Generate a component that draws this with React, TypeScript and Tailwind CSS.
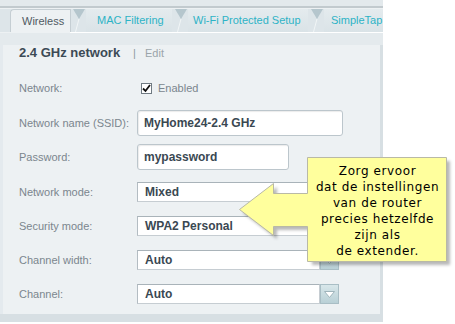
import React from "react";

const labelCls = "w-[118px] shrink-0 text-[11px] text-[#7b868e]";
const valCls = "text-[12px] font-bold text-[#3a4852]";

function Notch({ first }: { first?: boolean }) {
  return (
    <svg width="16" height="23" viewBox="0 0 16 23" className="shrink-0 block">
      <rect x="0" y="0" width="16" height="23" fill="#dde5e9" />
      {first && <rect x="0" y="0" width="1" height="23" fill="#c5ced3" />}
      <polygon points="3,0 15,0 9,10" fill="#b5c6cd" />
      <line x1="9" y1="10" x2="5.5" y2="23" stroke="#f1f5f6" strokeWidth="1" />
    </svg>
  );
}

function SelectBox({ value }: { value: string }) {
  return (
    <div className="flex h-[20px]">
      <div className="w-[183px] h-full bg-white border border-[#c6cdd2] border-t-[#a9b3b9] border-l-[#b3bcc2] flex items-center pl-[7px]">
        <span className={valCls}>{value}</span>
      </div>
      <div className="w-[19px] h-full border border-[#a9bec5] bg-gradient-to-b from-[#d8e7ea] to-[#b9d0d6] flex items-center justify-center">
        <svg width="11" height="7" viewBox="0 0 11 7">
          <polygon points="0.5,0.5 10.5,0.5 5.5,6.5" fill="#ffffff" stroke="#9fb4bb" strokeWidth="1" />
        </svg>
      </div>
    </div>
  );
}

export default function App() {
  return (
    <div className="w-[455px] h-[324px] bg-white relative overflow-hidden font-['Liberation_Sans',Arial,sans-serif]">
      <div className="w-[383px] flex flex-col">
        <div className="h-[6px] bg-[#e3e9ec]" />
        <div className="h-[2px] bg-[#c2cace]" />
        <div className="h-[1px] bg-[#edf1f3]" />
        <div className="flex h-[23px] bg-[#dde5e9]">
          <div className="w-[10px] shrink-0" />
          <div className="w-[60px] shrink-0 bg-[#edf1f3] border-l border-t border-[#c5ced3] rounded-tl-[4px] flex items-center pl-[11px] text-[11px] text-[#4f5a62]">
            Wireless
          </div>
          <Notch first />
          <div className="w-[86px] shrink-0 flex items-center pl-[11px] text-[11px] text-[#2db3c6] bg-gradient-to-b from-[#e4ebee] to-[#dae3e7]">
            MAC Filtering
          </div>
          <Notch />
          <div className="w-[120px] shrink-0 flex items-center pl-[5px] text-[11px] text-[#2db3c6] bg-gradient-to-b from-[#e4ebee] to-[#dae3e7]">
            Wi-Fi Protected Setup
          </div>
          <Notch />
          <div className="flex-1 flex items-center pl-[7px] text-[11px] text-[#2db3c6] bg-gradient-to-b from-[#e4ebee] to-[#dae3e7]">
            SimpleTap
          </div>
        </div>
        <div className="flex h-[1px]">
          <div className="w-[70px] bg-[#edf1f3]" />
          <div className="flex-1 bg-white" />
        </div>
        <div className="h-[12px] bg-[#e4eaed]" />
        <div className="flex bg-[#d7dfe3] pr-[3px] pb-[8px]">
          <div className="w-[3px] bg-[#e4eaee]" />
          <div className="flex-1 bg-[#edf1f3] flex flex-col pl-[16px] h-[269px]">
            <div className="h-[16px] flex items-center">
              <span className="text-[13px] font-bold text-[#3c4a55] w-[114px]">2.4 GHz network</span>
              <span className="text-[11px] text-[#8e989e] w-[12px]">|</span>
              <span className="text-[11px] text-[#9ba4aa]">Edit</span>
            </div>
            <div className="h-[24px] mt-[15px] flex items-center">
              <span className={labelCls}>Network:</span>
              <div className="ml-[4px] w-[11px] h-[11px] bg-white border border-[#6f7a82] flex items-center justify-center">
                <svg width="9" height="9" viewBox="0 0 9 9">
                  <path d="M1 4.5 L3.5 7 L8 1" fill="none" stroke="#111" strokeWidth="1.8" />
                </svg>
              </div>
              <span className="ml-[6px] text-[11px] text-[#7b868e]">Enabled</span>
            </div>
            <div className="h-[26px] mt-[10px] flex items-center">
              <span className={labelCls}>Network name (SSID):</span>
              <div className="w-[206px] h-[26px] bg-white border border-[#bcc6cc] rounded-[3px] flex items-center pl-[6px] shadow-[inset_1px_1px_1px_rgba(0,0,0,0.08)]">
                <span className={valCls}>MyHome24-2.4 GHz</span>
              </div>
            </div>
            <div className="h-[26px] mt-[8px] flex items-center">
              <span className={labelCls}>Password:</span>
              <div className="w-[152px] h-[26px] bg-white border border-[#bcc6cc] rounded-[3px] flex items-center pl-[6px] shadow-[inset_1px_1px_1px_rgba(0,0,0,0.08)]">
                <span className={valCls}>mypassword</span>
              </div>
            </div>
            <div className="h-[20px] mt-[12px] flex items-center">
              <span className={labelCls}>Network mode:</span>
              <SelectBox value="Mixed" />
            </div>
            <div className="h-[20px] mt-[14px] flex items-center">
              <span className={labelCls}>Security mode:</span>
              <SelectBox value="WPA2 Personal" />
            </div>
            <div className="h-[20px] mt-[14px] flex items-center">
              <span className={labelCls}>Channel width:</span>
              <SelectBox value="Auto" />
            </div>
            <div className="h-[20px] mt-[14px] flex items-center">
              <span className={labelCls}>Channel:</span>
              <SelectBox value="Auto" />
            </div>
          </div>
        </div>
      </div>

      <svg className="absolute left-0 top-0 pointer-events-none" width="455" height="324" viewBox="0 0 455 324">
        <defs>
          <filter id="blur" x="-10%" y="-10%" width="130%" height="130%">
            <feGaussianBlur stdDeviation="1.5" />
          </filter>
        </defs>
        <path
          d="M308,157 H446 V261 H308 V226 H273 V235 L239,209 L273,183 V193 H308 Z"
          transform="translate(4,4)"
          fill="rgba(0,0,0,0.28)"
          filter="url(#blur)"
        />
        <path
          d="M307.5,157.5 H446.5 V261.5 H307.5 V226.5 H273.5 V235.5 L239.5,209.5 L273.5,183.5 V193.5 H307.5 Z"
          fill="#ffff9d"
          stroke="#b9b9a6"
          strokeWidth="1"
        />
      </svg>
      <div className="absolute left-[308px] top-[163px] w-[139px] text-center text-[12px] leading-[16px] tracking-[0.6px] text-black font-['DejaVu_Sans',Verdana,sans-serif]">
        Zorg ervoor
        <br />
        dat de instellingen
        <br />
        van de router
        <br />
        precies hetzelfde
        <br />
        zijn als
        <br />
        de extender.
      </div>
    </div>
  );
}
